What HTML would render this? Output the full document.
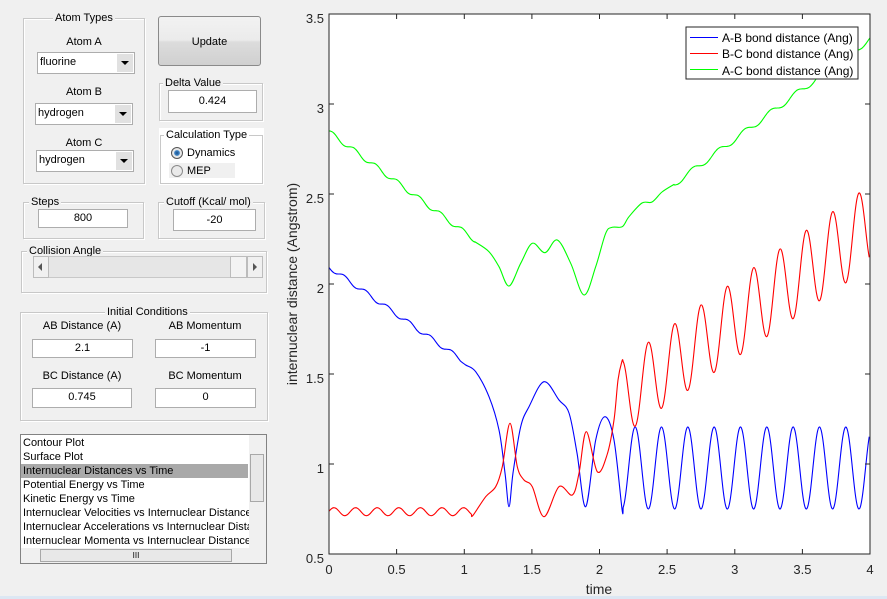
<!DOCTYPE html>
<html><head><meta charset="utf-8">
<style>
*{margin:0;padding:0;box-sizing:border-box}
body{width:887px;height:599px;background:#f0f0f0;position:relative;overflow:hidden;font-family:"Liberation Sans",Arial,sans-serif;font-size:11px;color:#000}
.a{position:absolute}
.grp{position:absolute;border:1px solid #c8c8c8;box-shadow:inset 1px 1px 0 #fff,1px 1px 0 #fff}
.gt{position:absolute;top:-8px;background:#f0f0f0;padding:0 2px;font-size:11px;white-space:nowrap;line-height:14px}
.tb{position:absolute;background:#fff;border:1px solid #adadad;text-align:center;font-size:11px;line-height:17px}
.sel{position:absolute;background:#fff;border:1px solid #adadad;font-size:11px;line-height:19px;padding-left:2px}
.sel i{position:absolute;right:1px;top:1px;bottom:1px;width:16px;background:#e1e1e1}
.sel i:after{content:"";position:absolute;left:4px;top:7px;border-left:4px solid transparent;border-right:4px solid transparent;border-top:4px solid #000}
.lbl{position:absolute;font-size:11px;text-align:center}
.li{position:absolute;left:2px;font-size:11px;line-height:14px;white-space:nowrap}
</style></head><body>

<div class="grp" style="left:23px;top:18px;width:122px;height:166px"><div class="gt" style="left:29px">Atom Types</div></div>
<div class="lbl" style="left:23px;width:122px;top:36px">Atom A</div>
<div class="sel" style="left:37px;top:52px;width:98px;height:22px">fluorine<i></i></div>
<div class="lbl" style="left:23px;width:122px;top:86px">Atom B</div>
<div class="sel" style="left:35px;top:103px;width:98px;height:22px">hydrogen<i></i></div>
<div class="lbl" style="left:23px;width:122px;top:137px">Atom C</div>
<div class="sel" style="left:36px;top:150px;width:98px;height:22px">hydrogen<i></i></div>

<div class="a" style="left:158px;top:16px;width:103px;height:50px;border:1px solid #8a8a8a;border-radius:3px;background:linear-gradient(#f2f2f2 0,#ebebeb 48%,#dcdcdc 52%,#d0d0d0 100%);text-align:center;line-height:50px;font-size:11px">Update</div>

<div class="grp" style="left:159px;top:83px;width:104px;height:38px"><div class="gt" style="left:3px">Delta Value</div></div>
<div class="tb" style="left:168px;top:90px;width:89px;height:23px;line-height:21px">0.424</div>

<div class="a" style="left:159px;top:128px;width:105px;height:57px;background:#fff"></div>
<div class="grp" style="left:160px;top:135px;width:103px;height:49px;background:#fff"><div class="gt" style="left:3px;background:#fff">Calculation Type</div></div>
<div class="a" style="left:169px;top:163px;width:66px;height:15px;background:#f0f0f0"></div>
<div class="a" style="left:171px;top:147px;width:12px;height:12px;border-radius:50%;border:1px solid #555;background:radial-gradient(circle,#1a4f8a 0,#3f87c9 2.5px,#e8e8e8 3.2px)"></div>
<div class="a" style="left:187px;top:147px;font-size:11px">Dynamics</div>
<div class="a" style="left:171px;top:165px;width:12px;height:12px;border-radius:50%;border:1px solid #8a8a8a;background:#eaeaea"></div>
<div class="a" style="left:187px;top:165px;font-size:11px">MEP</div>

<div class="grp" style="left:23px;top:202px;width:121px;height:37px"><div class="gt" style="left:5px">Steps</div></div>
<div class="tb" style="left:38px;top:209px;width:90px;height:19px">800</div>
<div class="grp" style="left:158px;top:202px;width:107px;height:37px"><div class="gt" style="left:5px">Cutoff (Kcal/ mol)</div></div>
<div class="tb" style="left:173px;top:209px;width:83px;height:22px;line-height:20px">-20</div>

<div class="grp" style="left:21px;top:251px;width:246px;height:42px"><div class="gt" style="left:5px">Collision Angle</div></div>
<div class="a" style="left:33px;top:256px;width:230px;height:22px;background:#e6e6e6;border:1px solid #c8c8c8"></div>
<div class="a" style="left:33px;top:256px;width:16px;height:22px;background:#f0f0f0;border:1px solid #bcbcbc"></div>
<div class="a" style="left:38px;top:263px;border-top:4px solid transparent;border-bottom:4px solid transparent;border-right:4px solid #555"></div>
<div class="a" style="left:230px;top:256px;width:17px;height:22px;background:#f3f3f3;border:1px solid #bcbcbc"></div>
<div class="a" style="left:247px;top:256px;width:16px;height:22px;background:#f0f0f0;border:1px solid #bcbcbc"></div>
<div class="a" style="left:253px;top:263px;border-top:4px solid transparent;border-bottom:4px solid transparent;border-left:4px solid #555"></div>

<div class="grp" style="left:20px;top:312px;width:248px;height:109px"><div class="gt" style="left:84px">Initial Conditions</div></div>
<div class="lbl" style="left:22px;width:120px;top:320px">AB Distance (A)</div>
<div class="lbl" style="left:145px;width:120px;top:320px">AB Momentum</div>
<div class="tb" style="left:32px;top:339px;width:101px;height:19px">2.1</div>
<div class="tb" style="left:155px;top:339px;width:101px;height:19px">-1</div>
<div class="lbl" style="left:22px;width:120px;top:370px">BC Distance (A)</div>
<div class="lbl" style="left:145px;width:120px;top:370px">BC Momentum</div>
<div class="tb" style="left:32px;top:388px;width:100px;height:20px">0.745</div>
<div class="tb" style="left:155px;top:388px;width:101px;height:20px">0</div>

<div class="a" style="left:20px;top:434px;width:247px;height:130px;background:#fff;border:1px solid #828282;overflow:hidden">
<div class="a" style="left:0;top:29px;width:227px;height:14px;background:#a9a9a9"></div>
<div class="li" style="top:1px">Contour Plot</div>
<div class="li" style="top:15px">Surface Plot</div>
<div class="li" style="top:29px">Internuclear Distances vs Time</div>
<div class="li" style="top:43px">Potential Energy vs Time</div>
<div class="li" style="top:57px">Kinetic Energy vs Time</div>
<div class="li" style="top:71px">Internuclear Velocities vs Internuclear Distance</div>
<div class="li" style="top:85px">Internuclear Accelerations vs Internuclear Distance</div>
<div class="li" style="top:99px">Internuclear Momenta vs Internuclear Distance</div>
<div class="a" style="left:228px;top:0;width:17px;height:113px;background:#f0f0f0"></div>
<div class="a" style="left:229px;top:19px;width:14px;height:48px;background:#e8e8e8;border:1px solid #a8a8a8"></div>
<div class="a" style="left:0;top:113px;width:245px;height:15px;background:#f0f0f0"></div>
<div class="a" style="left:19px;top:114px;width:192px;height:13px;background:#e8e8e8;border:1px solid #a8a8a8;font-size:8px;text-align:center;line-height:11px">III</div>
</div>

<div class="a" style="left:0;top:596px;width:887px;height:3px;background:#dce7f3"></div>

<svg class="a" style="left:0;top:0" width="887" height="599" xmlns="http://www.w3.org/2000/svg" font-family="Liberation Sans, Arial, sans-serif">
<rect x="329" y="14" width="541" height="540" fill="#fff"/>
<g id="curves" fill="none" stroke-width="1.1"></g>
<rect x="329" y="14" width="541" height="540" fill="none" stroke="#262626" stroke-width="1"/>
<g stroke="#262626" stroke-width="1">
<path d="M329 554h5M329 464h5M329 374h5M329 284h5M329 194h5M329 104h5M329 14h5M870 464h-5M870 374h-5M870 284h-5M870 194h-5M870 104h-5"/>
<path d="M396.6 554v-5M464.3 554v-5M531.9 554v-5M599.5 554v-5M667.1 554v-5M734.8 554v-5M802.4 554v-5M396.6 14v5M464.3 14v5M531.9 14v5M599.5 14v5M667.1 14v5M734.8 14v5M802.4 14v5"/>
</g>
<g fill="#262626" font-size="13" text-anchor="end">
<text x="324" y="563">0.5</text><text x="324" y="473">1</text><text x="324" y="383">1.5</text><text x="324" y="293">2</text><text x="324" y="203">2.5</text><text x="324" y="113">3</text><text x="324" y="23">3.5</text>
</g>
<g fill="#262626" font-size="13" text-anchor="middle">
<text x="329" y="574">0</text><text x="396.6" y="574">0.5</text><text x="464.3" y="574">1</text><text x="531.9" y="574">1.5</text><text x="599.5" y="574">2</text><text x="667.1" y="574">2.5</text><text x="734.8" y="574">3</text><text x="802.4" y="574">3.5</text><text x="870" y="574">4</text>
<text x="599" y="594" font-size="14">time</text>
<text transform="translate(297 284) rotate(-90)" font-size="14">internuclear distance (Angstrom)</text>
</g>
<rect x="686" y="27" width="172" height="52" fill="#fff" stroke="#262626"/>
<line x1="690" y1="37.5" x2="718" y2="37.5" stroke="#0000ff"/><line x1="690" y1="53.5" x2="718" y2="53.5" stroke="#ff0000"/><line x1="690" y1="69.5" x2="718" y2="69.5" stroke="#00ff00"/>
<g font-size="12" fill="#000"><text x="722" y="42">A-B bond distance (Ang)</text><text x="722" y="58">B-C bond distance (Ang)</text><text x="722" y="75">A-C bond distance (Ang)</text></g>
</svg>

<script>
(function(){
var PI=Math.PI,P=26.33;
function cr(pts){var d="M"+pts[0][0].toFixed(1)+" "+pts[0][1].toFixed(1);
for(var i=0;i<pts.length-1;i++){var p0=pts[i-1]||pts[i],p1=pts[i],p2=pts[i+1],p3=pts[i+2]||p2;
d+="C"+(p1[0]+(p2[0]-p0[0])/6).toFixed(1)+" "+(p1[1]+(p2[1]-p0[1])/6).toFixed(1)+" "+(p2[0]-(p3[0]-p1[0])/6).toFixed(1)+" "+(p2[1]-(p3[1]-p1[1])/6).toFixed(1)+" "+p2[0].toFixed(1)+" "+p2[1].toFixed(1);}
return d;}
var b=[];for(var x=329;x<=462;x+=1.5){b.push([x,267+0.7*(x-329)+2.4*Math.sin(2*PI*(x-339+10.75)/21.5)]);}
b=b.concat([[465.7,365],[475.7,371.7],[489,396.7],[499,430],[505,473],[509,506.7],[513,473],[520.7,426.7],[529,406.7],[544,381.7],[559,400],[569,413],[577,453],[585.7,506.7],[595.7,440],[605,416.7],[614,440]]);
for(var x=622;x<=870;x+=1.2){b.push([x,468+41*Math.cos(2*PI*(x-622)/P)]);}
var r=[];for(var x=329;x<=474;x+=1.5){r.push([x,511.7-4*Math.cos(2*PI*(x-334)/21.6)]);}
r=r.concat([[485.7,496.7],[495.7,486.7],[502.3,466.7],[510,423.3],[517.3,466.7],[524,480],[532.3,486.7],[544,516.7],[559,486.7],[572.3,495],[579,473.3],[586.3,431.7],[597.3,471.7],[607,455],[614,420],[618,380]]);
for(var x=622;x<=870;x+=1.2){var U=361-0.709*(x-622),L=425-0.681*(x-637);r.push([x,(U+L)/2-(L-U)/2*Math.cos(2*PI*(x-622)/P)]);}
var g=[];for(var x=329;x<=477;x+=1.5){g.push([x,132+0.74*(x-329)+2.55*Math.sin(2*PI*(x-349+10.8)/21.6)]);}
g=g.concat([[489,251.7],[499,266.7],[509,286],[520.7,263.3],[532.3,243.3],[545,252.7],[557.3,240],[570.7,263.3],[584,295],[595.7,266.7],[605.7,233.3],[612.3,227.3],[622.3,226.7],[629,216.7],[642,203],[652,202],[662,192]]);
for(var x=673;x<=870;x+=1.2){g.push([x,185-0.74*(x-673)+3*Math.sin(2*PI*(x-673)/26)]);}
var G=document.getElementById("curves");
[[g,"#00ff00"],[b,"#0000ff"],[r,"#ff0000"]].forEach(function(c){var p=document.createElementNS("http://www.w3.org/2000/svg","path");p.setAttribute("d",cr(c[0]));p.setAttribute("stroke",c[1]);G.appendChild(p);});
})();
</script>
</body></html>
